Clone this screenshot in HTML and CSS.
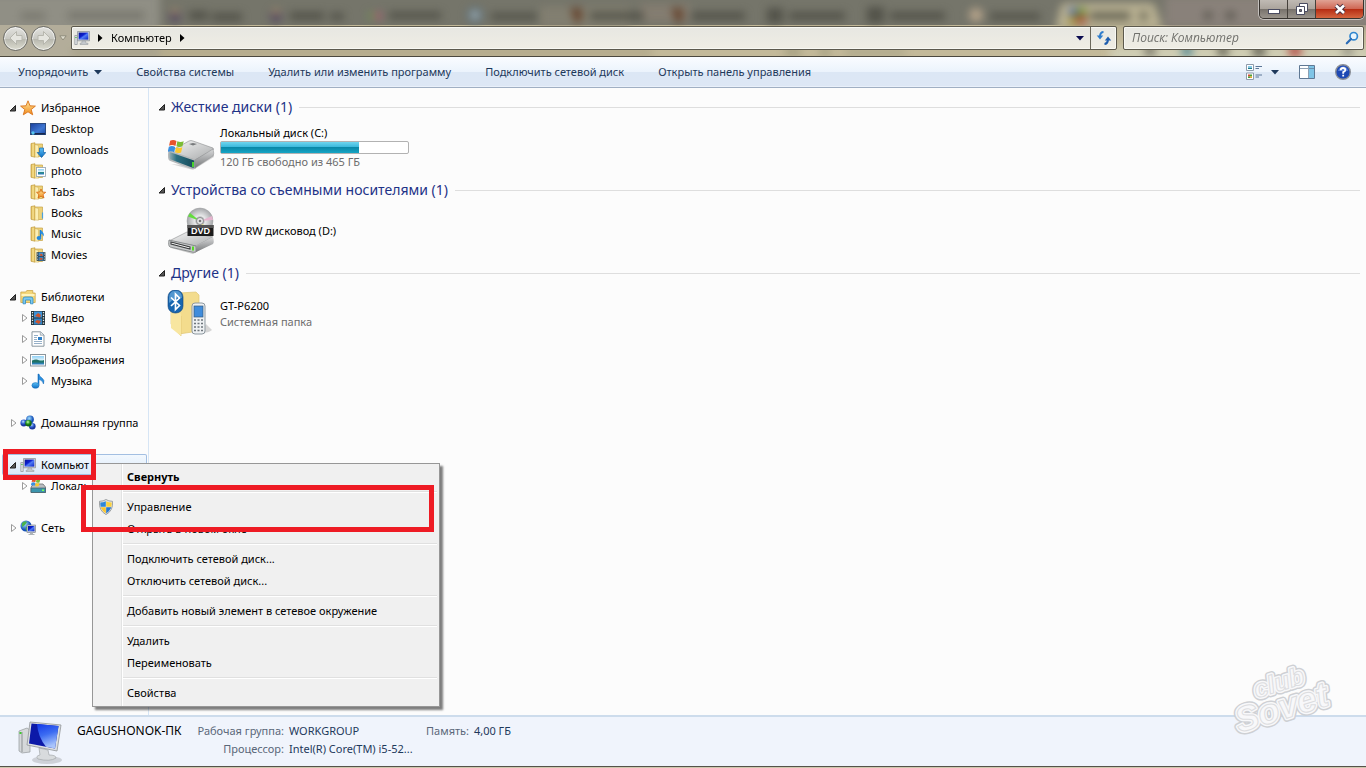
FILE: index.html
```html
<!DOCTYPE html>
<html lang="ru">
<head>
<meta charset="utf-8">
<title>Компьютер</title>
<link rel="stylesheet" href="styles.css">
</head>
<body>
<svg class="defs" aria-hidden="true">
  <defs>
    <linearGradient id="gFold" x1="0" y1="0" x2="1" y2="0"><stop offset="0" stop-color="#d9b54f"/><stop offset=".5" stop-color="#f6df8e"/><stop offset="1" stop-color="#e3c15e"/></linearGradient>
    <linearGradient id="gStar" x1="0" y1="0" x2="0" y2="1"><stop offset="0" stop-color="#ffe9a0"/><stop offset="1" stop-color="#f08a1c"/></linearGradient>
    <linearGradient id="gScreen" x1="0" y1="0" x2="1" y2="1"><stop offset="0" stop-color="#0a1490"/><stop offset=".4" stop-color="#0b1fd0"/><stop offset=".55" stop-color="#4f7cf5"/><stop offset="1" stop-color="#0c24c8"/></linearGradient>
    <linearGradient id="gPanel" x1="0" y1="0" x2=".3" y2="1"><stop offset="0" stop-color="#1238e8"/><stop offset=".5" stop-color="#3c6cf2"/><stop offset="1" stop-color="#a9c4fb"/></linearGradient>
    <linearGradient id="gDesk" x1="0" y1="0" x2="1" y2="1"><stop offset="0" stop-color="#1b3f9c"/><stop offset=".6" stop-color="#3f77d2"/><stop offset="1" stop-color="#1d4aa5"/></linearGradient>
    <linearGradient id="gBlue" x1="0" y1="0" x2="0" y2="1"><stop offset="0" stop-color="#5cc0f5"/><stop offset="1" stop-color="#0e6fc4"/></linearGradient>
    <linearGradient id="gTop" x1="0" y1="0" x2="1" y2="1"><stop offset="0" stop-color="#f7f7f7"/><stop offset="1" stop-color="#a9abac"/></linearGradient>
    <linearGradient id="gSide" x1="0" y1="0" x2="0" y2="1"><stop offset="0" stop-color="#d8d9da"/><stop offset="1" stop-color="#77797b"/></linearGradient>
    <linearGradient id="gFront" x1="0" y1="0" x2="1" y2="0"><stop offset="0" stop-color="#9fb4ba"/><stop offset=".3" stop-color="#2b6f82"/><stop offset="1" stop-color="#164957"/></linearGradient>
    <linearGradient id="gSky" x1="0" y1="0" x2="0" y2="1"><stop offset="0" stop-color="#8fd0f6"/><stop offset=".5" stop-color="#e3f5fb"/><stop offset=".55" stop-color="#2b8a7c"/><stop offset="1" stop-color="#2b7cc4"/></linearGradient>
    <radialGradient id="gDisc"><stop offset="0" stop-color="#fff"/><stop offset=".25" stop-color="#9a9c9e"/><stop offset=".4" stop-color="#e8e9ea"/><stop offset="1" stop-color="#a5a7aa"/></radialGradient>
    <radialGradient id="gGlobe" cx=".4" cy=".35"><stop offset="0" stop-color="#9fe0ff"/><stop offset="1" stop-color="#1450b8"/></radialGradient>
    <radialGradient id="gBall" cx=".4" cy=".3"><stop offset="0" stop-color="#c8e0ff"/><stop offset=".5" stop-color="#3f72de"/><stop offset="1" stop-color="#1a38a0"/></radialGradient>
    <radialGradient id="gBallG" cx=".4" cy=".3"><stop offset="0" stop-color="#c8ffb0"/><stop offset=".6" stop-color="#2f9e26"/><stop offset="1" stop-color="#13660f"/></radialGradient>
  </defs>
  <symbol id="expanded" viewBox="0 0 8 8"><path d="M6.500 1.500v5.500H1z" fill="#555" stroke="#222" stroke-width="1"/></symbol>
  <symbol id="collapsed" viewBox="0 0 8 8"><path d="M2.500.5v7L7 4z" fill="#fff" stroke="#9a9a9a"/></symbol>
  <symbol id="star" viewBox="0 0 16 16"><path d="M8 .8l2 5 5.400.3-4.200 3.400 1.500 5.300L8 11.800l-4.700 3 1.500-5.300L.6 6.100 6 5.800z" fill="url(#gStar)" stroke="#d9731a" stroke-width=".9"/></symbol>
  <symbol id="desktop" viewBox="0 0 16 16"><rect x=".5" y="2.500" width="15" height="11" fill="url(#gDesk)" stroke="#2b4a80"/><path d="M1 12h14v1.500H1z" fill="#17284e"/><circle cx="3" cy="12" r="1.700" fill="#57c4ee"/></symbol>
  <symbol id="folder" viewBox="0 0 16 16"><path d="M5.500 2h7v12.500h-7z" fill="#edd27a" stroke="#c7a348" stroke-width=".7"/><path d="M1 1.500 5 .8v14.400L1 14.300z" fill="url(#gFold)" stroke="#c09a3c" stroke-width=".7"/><path d="M5 2.500l3.500 1v11.700L5 15z" fill="#fbeeb4" stroke="#cfae55" stroke-width=".5"/></symbol>
  <symbol id="downloads" viewBox="0 0 16 16"><use href="#folder"/><path d="M9.500 6h4v4.500h2.300L11.500 15.500 7.200 10.500h2.300z" fill="url(#gBlue)" stroke="#1564a8" stroke-width=".7"/></symbol>
  <symbol id="photo" viewBox="0 0 16 16"><use href="#folder"/><rect x="6.500" y="4.500" width="9" height="9" fill="#fff" stroke="#8fa1ad" stroke-width=".8"/><rect x="8" y="6" width="6" height="5.500" fill="url(#gSky)"/></symbol>
  <symbol id="tabs" viewBox="0 0 16 16"><use href="#folder"/><path d="M11 5l1.200 3 3.500.3-2.700 2.200 1 3.600-3-2-3 2 1-3.600-2.500-2.200 3.300-.3z" fill="url(#gStar)" stroke="#d4650c" stroke-width=".8"/></symbol>
  <symbol id="books" viewBox="0 0 16 16"><use href="#folder"/><path d="M12.500 7.500v6" stroke="#4ba0dc" stroke-width="1.200"/></symbol>
  <symbol id="music" viewBox="0 0 16 16"><use href="#folder"/><path d="M10.500 4v7" stroke="#1877c8" stroke-width="1.500"/><path d="M10.500 4q4.500 3 3 6.500Q13 8 10.500 7.500z" fill="#2b90e0"/><ellipse cx="9" cy="12" rx="2.400" ry="1.900" fill="#2488dc"/></symbol>
  <symbol id="film" viewBox="0 0 16 16"><path d="M1 1h14v14H1z" fill="#23343c"/><path d="M4 1.500h8v6H4z" fill="#3e93d8"/><path d="M4 8.500h8v6H4z" fill="#3584c4"/><path d="M5 6l3-3 3 2-1 2.500zM5 12l2-2 4 1-2 3z" fill="#d0542c"/><path d="M2.500 2v12M13.500 2v12" stroke="#e4eef0" stroke-width="1.300" stroke-dasharray="1.300 1.300"/></symbol>
  <symbol id="movies" viewBox="0 0 16 16"><use href="#folder"/><use href="#film" x="6" y="4" width="10" height="11"/></symbol>
  <symbol id="libs" viewBox="0 0 16 16"><path d="M.8 3h5l1-1.500h6V4h2.400v9.500H.8z" fill="#f3d679" stroke="#c79d3c" stroke-width=".7"/><path d="M1.500 5h13v2h-13z" fill="#fff3bd"/><path d="M3 14.800V10q0-2 2-2h6q2 0 2 2v4.800h-2.500V11H5.500v3.800z" fill="#7cc8ee" stroke="#2f8cc4" stroke-width=".8"/></symbol>
  <symbol id="doc" viewBox="0 0 16 16"><path d="M2 .8h8.500L14 4v11.200H2z" fill="#fff" stroke="#7e8c96" stroke-width=".9"/><path d="M10.300 1v3.200H14" fill="#dfe6ea" stroke="#7e8c96" stroke-width=".6"/><path d="M4 4.500h4M4 6.500h3M4 8.500h3M4 10.500h8M4 12.500h8" stroke="#8aa7c2" stroke-width=".9"/><rect x="8" y="6" width="4" height="3" fill="#2b7ec8"/></symbol>
  <symbol id="pic" viewBox="0 0 16 16"><rect x=".5" y="2.500" width="15" height="11.500" fill="#fff" stroke="#8b959c"/><rect x="2" y="4" width="12" height="8.500" fill="url(#gSky)"/><path d="M2 9q4-2.500 7-.5t5-.5v2.500H2z" fill="#1f7166"/></symbol>
  <symbol id="note" viewBox="0 0 16 16"><path d="M8.500 1v11" stroke="#1877c8" stroke-width="1.600"/><path d="M8.500.8Q9 3 12 5t1.500 6Q13 7.500 8.500 6z" fill="#2b90e0" stroke="#1668b4" stroke-width=".5"/><ellipse cx="5.500" cy="12.400" rx="3.600" ry="2.800" fill="url(#gBlue)" stroke="#1668b4" stroke-width=".5"/></symbol>
  <symbol id="homegroup" viewBox="0 0 16 16"><circle cx="10" cy="4.500" r="3.900" fill="url(#gGlobe)"/><circle cx="3.800" cy="8" r="3.400" fill="url(#gBall)"/><circle cx="12.300" cy="11.300" r="3.300" fill="url(#gBall)"/><circle cx="8.500" cy="8.300" r="3.200" fill="url(#gBallG)"/></symbol>
  <symbol id="pc" viewBox="0 0 16 16"><path d="M.8 5.500h2.400v9H.8z" fill="#e1e4e6" stroke="#8b9196" stroke-width=".7"/><path d="M1.300 7.500h1.300" stroke="#3bbd3b"/><path d="M3.500 1.500h12v9.300h-12z" fill="#cdd2d6" stroke="#868c92" stroke-width=".7"/><path d="M4.700 2.600h9.600v7H4.700z" fill="url(#gScreen)"/><path d="M8 11h3.500l.5 2.200h2v1.300H6v-1.300h1.700z" fill="#c3c8cc" stroke="#90969b" stroke-width=".5"/></symbol>
  <symbol id="flag" viewBox="0 0 16 14"><path d="M2 1.500q3-1.500 6 .3L7 6.500Q4 5 1 6.300z" fill="#e8542c"/><path d="M8.800 2q3 1.400 6 0l-1.200 4.800q-3 1.300-5.700-.1z" fill="#7cbc35"/><path d="M.8 7.300q3-1.400 6 .2l-1 4.800q-3-1.500-6.100-.3z" fill="#3a8fe0"/><path d="M7.600 7.700q3 1.400 5.900.1l-1.200 4.800q-3 1.300-5.700-.1z" fill="#fbc82d"/></symbol>
  <symbol id="disksm" viewBox="0 0 16 16"><path d="M1 9l3-3h9l2.500 3v5.500H1z" fill="#b9bdc0" stroke="#6d7174" stroke-width=".8"/><path d="M1 10h14.500v4.500H1z" fill="#3c95ad" stroke="#486068" stroke-width=".7"/><path d="M12 12.300h2" stroke="#7dff55" stroke-width="1.500"/><use href="#flag" x="1" y="0" width="10" height="9"/></symbol>
  <symbol id="net" viewBox="0 0 16 16"><circle cx="6" cy="6" r="5.500" fill="url(#gGlobe)"/><path d="M2 3q3-3 5-1L5 5 2 7zM6 7l3 1-2 3q-2-1-1-4z" fill="#4bb34a"/><rect x="7" y="5" width="8.500" height="7.500" fill="#cdd2d6" stroke="#6f7780" stroke-width=".6"/><rect x="8" y="6" width="6.500" height="5.300" fill="url(#gScreen)"/><path d="M10 12.500h3v1.500h1.500v1H8.500v-1H10z" fill="#aeb4b9"/></symbol>
  <symbol id="shield" viewBox="0 0 16 16"><path d="M8 .5Q10.500 2.300 14.500 2.300 15.500 11.500 8 15.600.5 11.500 1.500 2.300 5.500 2.300 8 .5z" fill="#e2e4e5" stroke="#8a8f92" stroke-width=".8"/><path d="M7.800 2.200v5.600H2.700Q2.200 6 2.300 3.600 5.500 3.500 7.800 2.200z" fill="#2e86d8"/><path d="M8.200 2.200v5.600h5.100q.5-1.800.4-4.200Q10.500 3.500 8.200 2.200z" fill="#fbd13c"/><path d="M7.800 8.200H2.800q1.200 3.900 5 6.200z" fill="#fbc52c"/><path d="M8.200 8.200h5q-1.200 3.900-5 6.200z" fill="#2a78cc"/></symbol>
  <symbol id="hdd" viewBox="0 0 48 48">
    <path d="M4 40l22 6 21-13v-3L28 42z" fill="#000" opacity=".15"/>
    <path d="M2 28 22 17q2-1 4 0l20 7q1 1 0 2L28 36z" fill="url(#gTop)" stroke="#8b8d8f" stroke-width=".6"/>
    <path d="M2 27l26 9v8q-2 .8-4 0L3 36q-2-1-1-9z" fill="url(#gFront)" stroke="#b5b8ba" stroke-width="1.400"/>
    <path d="M28 36 46 25q1.500 5 0 7L28 44z" fill="url(#gSide)" stroke="#8b8d8f" stroke-width=".5"/>
    <path d="M26 38v5" stroke="#4fe028" stroke-width="1.800"/>
    <path d="M22 20l4-1 4 1-4 1.500z" fill="#77797b"/>
    <use href="#flag" x="1" y="15" width="17" height="15"/>
  </symbol>
  <symbol id="dvd" viewBox="0 0 48 48">
    <path d="M4 41l22 6 21-12-19 6z" fill="#000" opacity=".2"/>
    <path d="M2 34 20 25l26 5-17 9z" fill="url(#gTop)" stroke="#8b8d8f" stroke-width=".6"/>
    <path d="M2 33l27 6v6q-2 .5-4 0L3 40q-2-1-1-7z" fill="#c9cbcc" stroke="#797c7e" stroke-width=".8"/>
    <path d="M4 35l19 5v2L4 37z" fill="#fff" stroke="#3b3d3e" stroke-width="1.100"/>
    <path d="M29 39 46 30q1.500 5 0 7L29 45z" fill="url(#gSide)"/>
    <path d="M26 39.500v4" stroke="#57d928" stroke-width="2"/>
    <circle cx="33" cy="14" r="13" fill="url(#gDisc)" stroke="#9d9fa1" stroke-width=".5"/>
    <path d="M33 14 21 9.500 23 6z" fill="#63dc3e"/><path d="M33 14 45 9l1 4z" fill="#e6b5cf"/><path d="M33 14l9 9-4 3z" fill="#e7e690"/><circle cx="33" cy="14" r="3.500" fill="#e7e8e9" stroke="#8b8d8f"/><circle cx="33" cy="14" r="1.300" fill="#777"/>
    <path d="M20.500 18h26v11h-26z" fill="#1c1c1c"/><path d="M20.500 18h26v3h-26z" fill="#555"/>
    <text x="33.500" y="27" text-anchor="middle" class="disc-label">DVD</text>
  </symbol>
  <symbol id="phone" viewBox="0 0 48 48">
    <path d="M34 43q8 0 11-3l-6-6z" fill="#000" opacity=".15"/>
    <path d="M12 3l17-1 3 3v36l-20 3z" fill="#f3dc8d" stroke="#e0c674" stroke-width=".7"/>
    <path d="M4 20 14 26v20L4 34z" fill="#efd47c" stroke="#dcc069" stroke-width=".6"/>
    <path d="M4 12l10 12v22L4 38z" fill="#f8e6a0"/>
    <rect x="25" y="13" width="13" height="31" rx="3" fill="#eef1f3" stroke="#8d989f"/>
    <rect x="27" y="16" width="9" height="11" fill="#3f8cdc" stroke="#35597c" stroke-width=".7"/>
    <path d="M27 30h9M27 33.500h9M27 37h9M27 40.500h9" stroke="#6e767c" stroke-width="1.600" stroke-dasharray="2 1.500"/>
    <rect x="1" y="0" width="15" height="23" rx="7" fill="#1766b0" stroke="#0d4278" stroke-width=".6"/>
    <path d="M2 8q0-7 6.500-7.300Q15 1 15 8q-5-2-13 5z" fill="#8dc7f0" opacity=".5"/>
    <path d="M4 7.500l8.500 8-4 4V4l4 4L4 16" fill="none" stroke="#fff" stroke-width="1.700"/>
  </symbol>
  <symbol id="bigpc" viewBox="0 0 48 48">
    <ellipse cx="30" cy="41" rx="15" ry="4" fill="#000" opacity=".14"/>
    <path d="M2 12l8-3 3 2v22L5 34l-3-2z" fill="#d5d8da" stroke="#94989b" stroke-width=".7"/><path d="M5 13v20" stroke="#8d9194"/><path d="M2.500 14h2" stroke="#3ecb2e" stroke-width="2"/>
    <path d="M22 29l9 2 1 5q7 0 7 3-6 4-18 1-3-3 2-4z" fill="#d8dbdd" stroke="#a4a8ab" stroke-width=".7"/>
    <path d="M13 3l31 3-4 26-30-6z" fill="#dde0e2" stroke="#909497" stroke-width=".8"/>
    <path d="M14.500 4.500 41.500 7 38 29.500 12 24.500z" fill="#0c19a8"/>
    <path d="M20 5l21.500 2L38 29.500 29 27.800Q21 18 20 5z" fill="url(#gPanel)"/>
  </symbol>
</svg>

<header class="titlebar">
  <svg class="backdrop" aria-hidden="true" viewBox="0 0 1366 57" preserveAspectRatio="xMinYMin slice">
    <rect width="1366" height="27" fill="#75756a"/>
    <rect y="25" width="1366" height="32" fill="#c3b999"/>
    <g class="soft">
      <rect x="-10" y="-8" width="170" height="70" fill="#a6a49a" opacity=".55"/>
      <rect x="540" y="6" width="90" height="22" fill="#8a8674" opacity=".6"/>
      <rect x="640" y="4" width="50" height="18" fill="#948577" opacity=".5"/>
      <path d="M1055 30l6-24q1-3 6-3h82q5 0 6 3l8 24z" fill="#b9b192"/>
      <rect x="1165" y="-4" width="210" height="32" fill="#8e857e" opacity=".8"/>
      <rect x="1110" y="46" width="260" height="20" fill="#cfcdb4"/>
      <g fill="#45453d" opacity=".7">
        <rect x="21" y="13" width="24" height="6" opacity=".5"/><rect x="68" y="12" width="76" height="7" opacity=".5"/>
        <rect x="189" y="11" width="19" height="9"/><rect x="212" y="13" width="30" height="8"/>
        <rect x="290" y="12" width="34" height="8"/><rect x="330" y="13" width="14" height="7"/>
        <rect x="389" y="12" width="52" height="7"/>
        <rect x="491" y="13" width="46" height="7"/><rect x="590" y="12" width="54" height="8"/>
        <rect x="691" y="12" width="54" height="8"/><rect x="767" y="8" width="16" height="15"/><rect x="789" y="12" width="56" height="8"/>
        <rect x="867" y="7" width="17" height="16"/><rect x="890" y="12" width="55" height="8"/><rect x="990" y="13" width="50" height="7"/>
        <rect x="1090" y="12" width="40" height="8"/><rect x="1140" y="12" width="7" height="8"/><rect x="1204" y="12" width="8" height="7"/><rect x="1226" y="12" width="9" height="7"/>
      </g>
      <circle cx="175" cy="16" r="6" fill="#4f4460"/><circle cx="175" cy="12" r="3" fill="#b99767"/>
      <circle cx="276" cy="16" r="6" fill="#4f4460"/><circle cx="276" cy="12" r="3" fill="#b99767"/>
      <rect x="369" y="12" width="6" height="8" fill="#6c8f55"/><rect x="375" y="12" width="6" height="8" fill="#a85870"/>
      <circle cx="475" cy="15" r="8" fill="#60747f"/><circle cx="475" cy="15" r="3" fill="#e0e4e0"/>
      <path d="M570 8h12v12l-6 4z" fill="#66452f"/><path d="M671 8h12v12l-6 4z" fill="#66452f"/>
      <circle cx="976" cy="15" r="7" fill="#b5a38a"/><rect x="1069" y="8" width="8" height="8" fill="#566fa4"/><rect x="1077" y="8" width="9" height="8" fill="#6f8d35"/><rect x="1069" y="16" width="8" height="8" fill="#a38f30"/><rect x="1077" y="16" width="9" height="8" fill="#a64a38"/>
      <rect x="72" y="50" width="580" height="5" fill="#9a9175" opacity=".7"/>
      <g opacity=".8"><rect x="785" y="49" width="16" height="6" fill="#8f8c70"/><rect x="820" y="49" width="10" height="6" fill="#8f8c70"/><rect x="845" y="50" width="60" height="5" fill="#9d9a80"/><circle cx="1150" cy="51" r="6" fill="#67665a"/><circle cx="1187" cy="51" r="6" fill="#3b7c8e"/><circle cx="1223" cy="51" r="6" fill="#4d4d42"/><circle cx="1259" cy="51" r="7" fill="#55554a"/><circle cx="1295" cy="51" r="7" fill="#b03c38"/><circle cx="1348" cy="51" r="6" fill="#8d8c80"/></g>
    </g>
  </svg>
  <div class="caption">
    <div class="winbuttons">
      <button type="button" class="winbtn" aria-label="Свернуть"><svg width="14" height="14" viewBox="0 0 14 14"><rect x="1.500" y="7.500" width="11" height="4" fill="#fff" stroke="#4a4b60"/></svg></button>
      <button type="button" class="winbtn" aria-label="Восстановить"><svg width="14" height="14" viewBox="0 0 14 14"><path d="M4.500 1.500h8v8h-8z" fill="#fff" stroke="#4a4b60"/><path d="M1.500 4.500h8v8h-8z" fill="#fff" stroke="#4a4b60"/><path d="M4.500 7.500h2v2h-2z" fill="#77716b" stroke="#4a4b60"/></svg></button>
      <button type="button" class="winbtn winclose" aria-label="Закрыть"><svg width="14" height="14" viewBox="0 0 14 14"><path d="M3 3.500l8 7.500M11 3.500L3 11" stroke="#4a3040" stroke-width="4.500"/><path d="M3 3.500l8 7.500M11 3.500L3 11" stroke="#fff" stroke-width="2.600"/></svg></button>
    </div>
  </div>
  <div class="navrow">
    <div class="travel">
      <button type="button" class="round" aria-label="Назад"><svg width="18" height="18" viewBox="0 0 18 18"><path d="M9.500 2.500 3 9l6.500 6.500v-4H15v-5H9.500z" fill="#e5e5df" stroke="#b7b7ae"/></svg></button>
      <button type="button" class="round" aria-label="Вперед"><svg width="18" height="18" viewBox="0 0 18 18"><path d="M8.500 2.500 15 9l-6.500 6.500v-4H3v-5h5.500z" fill="#e5e5df" stroke="#b7b7ae"/></svg></button>
      <button type="button" class="recent" aria-label="Последние страницы"><svg width="8" height="6" viewBox="0 0 8 6"><path d="M.8.8h6.400L4 5z" fill="#dedccd" stroke="#8f8c7c"/></svg></button>
    </div>
    <div class="address">
      <svg width="16" height="16"><use href="#pc"/></svg>
      <svg class="crumb" width="5" height="8" viewBox="0 0 5 8"><path d="M0 0v8l4.500-4z"/></svg>
      <a class="place" href="#computer">Компьютер</a>
      <svg class="crumb" width="5" height="8" viewBox="0 0 5 8"><path d="M0 0v8l4.500-4z"/></svg>
      <span class="spacer"></span>
      <button type="button" class="drop" aria-label="Предыдущие расположения"><svg width="8" height="5" viewBox="0 0 8 5"><path d="M0 0h8L4 4.500z" fill="#0b0b50"/></svg></button>
      <button type="button" class="refresh" aria-label="Обновить"><svg width="16" height="16" viewBox="0 0 16 16"><path d="M7.500 2Q4.500 2 4 6" fill="none" stroke="#2e7ccc" stroke-width="2"/><path d="M.8 5.500h6.400L4 9.500z" fill="#2e7ccc"/><path d="M8.500 14q3-.3 3.500-4" fill="none" stroke="#1c5cae" stroke-width="2"/><path d="M8.800 10.500h6.400L12 6.500z" fill="#1c5cae"/></svg></button>
    </div>
    <label class="search">
      <input type="search" placeholder="Поиск: Компьютер" aria-label="Поиск: Компьютер">
      <svg width="14" height="14" viewBox="0 0 14 14"><circle cx="8.700" cy="5.200" r="3.700" fill="#eaf5fc" stroke="#3287cf" stroke-width="1.700"/><path d="M6 8 1.800 12.300" stroke="#2b6cb6" stroke-width="2.200" stroke-linecap="round"/></svg>
    </label>
  </div>
</header>

<div class="toolbar" role="toolbar" aria-label="Команды">
  <button type="button" class="cmd">Упорядочить <svg width="8" height="5" viewBox="0 0 8 5"><path d="M0 0h8L4 4.500z" fill="#1e395b"/></svg></button>
  <button type="button" class="cmd">Свойства системы</button>
  <button type="button" class="cmd">Удалить или изменить программу</button>
  <button type="button" class="cmd">Подключить сетевой диск</button>
  <button type="button" class="cmd">Открыть панель управления</button>
  <div class="tools">
    <button type="button" class="view" aria-label="Вид"><svg width="16" height="16" viewBox="0 0 16 16"><path d="M.5.500h7v6h-7zM.5 9h7v6.500h-7z" fill="#fff" stroke="#8e9bab"/><path d="M2 3.500h4V5H2z" fill="#1c7c88"/><path d="M2 2h4v1.500H2z" fill="#84c9ee"/><path d="M2 10.500h2v2H2z" fill="#d34c30"/><path d="M4 10.500h2v2H4zM2 12.500h2V14H2z" fill="#4ba038"/><path d="M4 12.500h2V14H4z" fill="#e3a82c"/><path d="M9.500 2.500H16M9.500 4.500H13M9.500 11H16M9.500 13H13" stroke="#5c7697"/></svg><svg width="8" height="5" viewBox="0 0 8 5"><path d="M0 0h8L4 4.500z" fill="#1e395b"/></svg></button>
    <button type="button" aria-label="Область просмотра"><svg width="16" height="14" viewBox="0 0 16 14"><path d="M.5.500h15v13H.5z" fill="#fff" stroke="#5f7894"/><path d="M10 1h5v12h-5z" fill="#7fc4e6"/><path d="M9.500 1v12M1 3.500h14" stroke="#5f7894" opacity=".7"/></svg></button>
    <button type="button" aria-label="Справка"><svg width="16" height="16" viewBox="0 0 16 16"><circle cx="8" cy="8" r="7.300" fill="#1d48b4" stroke="#8b8f96" stroke-width="1.400"/><path d="M3 7q1-4 5-4.500T13 7z" fill="#7ea3ec" opacity=".6"/><path d="M5.700 6.300Q5.800 4 8 4t2.300 2Q10.300 7.300 8.200 8.200v1.500M8.200 10.800v1.700" fill="none" stroke="#fff" stroke-width="1.800"/></svg></button>
  </div>
</div>

<main class="body">
  <nav class="tree" aria-label="Область переходов">
    <ul>
      <li><a class="node" href="#fav"><svg class="tw"><use href="#expanded"/></svg><svg class="ic"><use href="#star"/></svg>Избранное</a>
        <ul>
          <li><a class="node sub" href="#desk"><svg class="ic"><use href="#desktop"/></svg>Desktop</a></li>
          <li><a class="node sub" href="#dl"><svg class="ic"><use href="#downloads"/></svg>Downloads</a></li>
          <li><a class="node sub" href="#ph"><svg class="ic"><use href="#photo"/></svg>photo</a></li>
          <li><a class="node sub" href="#tb"><svg class="ic"><use href="#tabs"/></svg>Tabs</a></li>
          <li><a class="node sub" href="#bk"><svg class="ic"><use href="#books"/></svg>Books</a></li>
          <li><a class="node sub" href="#ms"><svg class="ic"><use href="#music"/></svg>Music</a></li>
          <li><a class="node sub" href="#mv"><svg class="ic"><use href="#movies"/></svg>Movies</a></li>
        </ul>
      </li>
      <li><a class="node" href="#lib"><svg class="tw"><use href="#expanded"/></svg><svg class="ic"><use href="#libs"/></svg>Библиотеки</a>
        <ul>
          <li><a class="node sub twist" href="#v"><svg class="tw"><use href="#collapsed"/></svg><svg class="ic"><use href="#film"/></svg>Видео</a></li>
          <li><a class="node sub twist" href="#d"><svg class="tw"><use href="#collapsed"/></svg><svg class="ic"><use href="#doc"/></svg>Документы</a></li>
          <li><a class="node sub twist" href="#i"><svg class="tw"><use href="#collapsed"/></svg><svg class="ic"><use href="#pic"/></svg>Изображения</a></li>
          <li><a class="node sub twist" href="#m"><svg class="tw"><use href="#collapsed"/></svg><svg class="ic"><use href="#note"/></svg>Музыка</a></li>
        </ul>
      </li>
      <li><a class="node" href="#home"><svg class="tw"><use href="#collapsed"/></svg><svg class="ic"><use href="#homegroup"/></svg>Домашняя группа</a></li>
      <li><a class="node selected" href="#computer"><svg class="tw"><use href="#expanded"/></svg><svg class="ic"><use href="#pc"/></svg>Компьют</a>
        <ul>
          <li><a class="node sub twist" href="#c"><svg class="tw"><use href="#collapsed"/></svg><svg class="ic"><use href="#disksm"/></svg>Локаль</a></li>
        </ul>
      </li>
      <li><a class="node" href="#network"><svg class="tw"><use href="#collapsed"/></svg><svg class="ic"><use href="#net"/></svg>Сеть</a></li>
    </ul>
  </nav>

  <section class="content" id="computer">
    <h2 class="group"><svg class="tw"><use href="#expanded"/></svg>Жесткие диски (1)</h2>
    <div class="item">
      <svg class="big"><use href="#hdd"/></svg>
      <div class="info">
        <div class="name">Локальный диск (C:)</div>
        <div class="bar" role="meter" aria-label="Занято на диске" aria-valuemin="0" aria-valuemax="465" aria-valuenow="345"><div class="fill" style="width:74%"></div></div>
        <div class="note">120 ГБ свободно из 465 ГБ</div>
      </div>
    </div>
    <h2 class="group"><svg class="tw"><use href="#expanded"/></svg>Устройства со съемными носителями (1)</h2>
    <div class="item">
      <svg class="big"><use href="#dvd"/></svg>
      <div class="info"><div class="name">DVD RW дисковод (D:)</div></div>
    </div>
    <h2 class="group"><svg class="tw"><use href="#expanded"/></svg>Другие (1)</h2>
    <div class="item">
      <svg class="big"><use href="#phone"/></svg>
      <div class="info"><div class="name">GT-P6200</div><div class="note">Системная папка</div></div>
    </div>
  </section>
</main>

<footer class="details">
  <svg class="big"><use href="#bigpc"/></svg>
  <dl class="props">
    <dt class="host">GAGUSHONOK-ПК</dt>
    <dt>Рабочая группа:</dt><dd>WORKGROUP</dd>
    <dt class="mem">Память:</dt><dd>4,00 ГБ</dd>
    <dt class="cpu">Процессор:</dt><dd>Intel(R) Core(TM) i5-52...</dd>
  </dl>
  <svg class="mark" width="116" height="90" viewBox="0 0 116 90">
    <g transform="rotate(-17 55 45)">
      <g class="mark-edge"><text x="35" y="38" font-size="25">club</text><text x="8" y="66" font-size="35">Sovet</text></g>
      <g class="mark-face"><text x="35" y="38" font-size="25">club</text><text x="8" y="66" font-size="35">Sovet</text></g>
      <g class="mark-line"><text x="35" y="38" font-size="25">club</text><text x="8" y="66" font-size="35">Sovet</text></g>
    </g>
  </svg>
</footer>
<div class="frame"></div>

<div class="menu" role="menu">
  <button type="button" role="menuitem" class="default">Свернуть</button>
  <hr>
  <button type="button" role="menuitem"><svg class="ic"><use href="#shield"/></svg>Управление</button>
  <button type="button" role="menuitem">Открыть в новом окне</button>
  <hr>
  <button type="button" role="menuitem">Подключить сетевой диск...</button>
  <button type="button" role="menuitem">Отключить сетевой диск...</button>
  <hr>
  <button type="button" role="menuitem">Добавить новый элемент в сетевое окружение</button>
  <hr>
  <button type="button" role="menuitem">Удалить</button>
  <button type="button" role="menuitem">Переименовать</button>
  <hr>
  <button type="button" role="menuitem">Свойства</button>
</div>
<div class="callout callout-node"></div>
<div class="callout callout-item"></div>
</body>
</html>
```
FILE: styles.css
```css
* { box-sizing: border-box; }
body {
  margin: 0;
  min-height: 100vh;
  display: flex;
  flex-direction: column;
  position: relative;
  background: #fcfcfc;
  color: #000;
  font: 11px/16px "Noto Sans", "Open Sans", sans-serif;
}
button { font: inherit; color: inherit; border: 0; padding: 0; background: none; }
a { color: inherit; text-decoration: none; }
ul { list-style: none; margin: 0; padding: 0; }
svg { flex: none; display: block; }
.defs { position: absolute; width: 0; height: 0; }
.disc-label { font: 700 9px "Liberation Sans", sans-serif; fill: #fff; }

.titlebar { position: relative; height: 57px; border-bottom: 1px solid #4b483e; overflow: hidden; }
.backdrop { position: absolute; left: 0; top: 0; width: 100%; height: 57px; }
.soft { filter: blur(4px); }
.caption { position: relative; height: 26px; display: flex; justify-content: flex-end; padding-right: 2px; }
.winbuttons {
  display: flex;
  height: 19px;
  border: 1px solid #37332f;
  border-top: 0;
  border-radius: 0 0 5px 5px;
  box-shadow: 0 0 0 1px rgba(255, 255, 255, .5);
  overflow: hidden;
}
.winbtn {
  width: 28px;
  display: grid;
  place-items: center;
  border-right: 1px solid #45403b;
  background: linear-gradient(#c0bab4, #aaa39c 50%, #77716b 50%, #9a948c);
}
.winclose { width: 47px; border: 0; background: linear-gradient(#e0a294, #cf6552 50%, #b52b12 50%, #d5653f); }
.navrow { position: relative; display: flex; gap: 6px; height: 24px; padding-right: 2px; }
.travel { display: flex; align-items: center; gap: 3px; width: 65px; padding-left: 3px; }
.round {
  flex: none;
  width: 25px;
  height: 25px;
  display: grid;
  place-items: center;
  border: 1px solid #6b6b66;
  border-radius: 50%;
  background: linear-gradient(#e3e3df, #c9c9c3 50%, #b5b5ac 50%, #dcdcd0);
  box-shadow: inset 0 0 0 1px rgba(255, 255, 255, .6);
}
.recent { flex: none; display: grid; place-items: center; }
.address, .search {
  display: flex;
  align-items: center;
  border: 1px solid #5c594d;
  border-radius: 2px;
  background: linear-gradient(#e7e7e2, #efede4);
  box-shadow: inset 0 0 0 1px #f8f8f3;
}
.address { flex: 1; gap: 6px; padding-left: 2px; }
.crumb { margin: 0 2px; }
.spacer { flex: 1; }
.drop { width: 20px; display: grid; place-items: center; }
.refresh { width: 26px; align-self: stretch; display: grid; place-items: center; border-left: 1px solid #6b685c; margin-left: -6px; }
.search { width: 241px; padding: 0 4px 0 8px; }
.search input { flex: 1; min-width: 0; border: 0; padding: 0; outline: 0; background: none; font: italic 12px/16px "Open Sans", "Noto Sans", sans-serif; }
.search input::placeholder { color: #70706c; }

.toolbar {
  display: flex;
  align-items: center;
  height: 31px;
  padding: 0 15px 0 18px;
  gap: 34px;
  color: #1e395b;
  background: linear-gradient(#fafcff, #ebf3fc 50%, #dce7f5 50%, #dde7f5);
  border-bottom: 1px solid #a0afc3;
  box-shadow: inset 0 -1px #e9f0fa;
}
.cmd { display: flex; align-items: center; gap: 6px; white-space: nowrap; }
.tools { margin-left: auto; display: flex; align-items: center; gap: 20px; }
.view { display: flex; align-items: center; gap: 9px; }

.body { flex: 1; display: flex; }
.tree { width: 149px; padding-top: 9px; border-right: 1px solid #d6e5f5; overflow: hidden; }
.tree > ul { display: flex; flex-direction: column; gap: 21px; }
.node { display: flex; align-items: center; gap: 5px; height: 21px; padding-left: 9px; white-space: nowrap; }
.node .tw { margin-right: -2px; }
.sub { padding-left: 30px; }
.twist { padding-left: 20px; }
.twist .tw { margin-right: -3px; }
.selected {
  margin: 0 1px 0 2px;
  padding-left: 7px;
  background: linear-gradient(#f4f9fe, #d9e9fa);
  box-shadow: inset 0 0 0 1px #a3bfe2;
  border-radius: 2px;
}
.tw { width: 8px; height: 8px; }
.ic { width: 16px; height: 16px; }
.big { width: 48px; height: 48px; }

.content { flex: 1; padding: 7px 6px 0 0; }
.group {
  display: flex;
  align-items: center;
  gap: 5px;
  height: 24px;
  margin: 0;
  padding-left: 9px;
  font-size: 14px;
  font-weight: 400;
  color: #1e3287;
}
.group::after { content: ""; flex: 1; height: 1px; margin-left: 2px; background: #dedede; }
.item { display: flex; align-items: center; gap: 5px; height: 59px; padding: 0 0 2px 18px; }
.bar { width: 189px; height: 13px; border: 1px solid #b2b2b2; border-radius: 2px; background: #fff; }
.fill { height: 100%; background: linear-gradient(#6fd5ef, #3bb9dc 45%, #0a88a8 50%, #16a5c5); }
.note { color: #6d6d6d; }

.details {
  position: relative;
  display: flex;
  align-items: flex-start;
  height: 51px;
  padding: 2px 0 0 17px;
  background: #f0f4fc;
  border-top: 2px solid #cddcec;
}
.props { display: grid; grid-template-columns: 112px 90px 132px auto auto; column-gap: 5px; row-gap: 2px; margin: 4px 0 0 12px; }
.props dt { color: #5a6779; text-align: right; white-space: nowrap; }
.props dd { margin: 0; color: #1e395b; white-space: nowrap; }
.props .host { color: #000; text-align: left; font-size: 12px; }
.props .cpu { grid-column: 2; }
.mark { position: absolute; right: 27px; bottom: 22px; font-family: "Liberation Sans", sans-serif; font-weight: 700; font-style: italic; }
.mark-edge { fill: #ced0d4; stroke: #ced0d4; stroke-width: 7px; stroke-linejoin: round; }
.mark-face { fill: #f8f8fa; stroke: #f8f8fa; stroke-width: 4px; stroke-linejoin: round; }
.mark-line { fill: #f8f8fa; stroke: #dcdde0; stroke-width: 1px; }
.frame { height: 2px; background: #cfc8ae; border-top: 1px solid #55524a; }

.menu {
  position: absolute;
  left: 92px;
  top: 463px;
  width: 348px;
  padding: 2px;
  border: 1px solid #979797;
  background: linear-gradient(90deg, #f1f1f1 28px, #e2e3e3 28px, #e2e3e3 29px, #fff 29px, #fff 30px, #f0f0f0 30px);
  box-shadow: 3px 3px 2px rgba(0, 0, 0, .5);
}
.menu button { position: relative; display: block; width: 100%; height: 22px; padding-left: 32px; text-align: left; white-space: nowrap; }
.menu .ic { position: absolute; left: 3px; top: 3px; }
.menu .default { font-weight: 700; }
.menu hr { height: 2px; margin: 3px 0 3px 28px; border: 0; border-top: 1px solid #e0e0e0; background: #fff; }
.callout { position: absolute; border: 5px solid #ee1b24; pointer-events: none; }
.callout-node { left: 3px; top: 449px; width: 93px; height: 31px; }
.callout-item { left: 81px; top: 485px; width: 353px; height: 47px; }
```
